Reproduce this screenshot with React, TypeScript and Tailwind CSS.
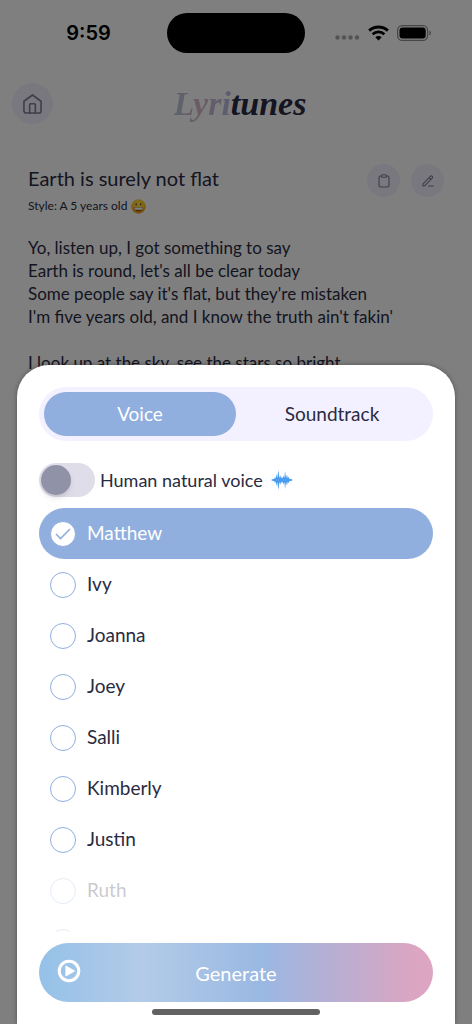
import React, { useState } from "react";

const voices = [
  "Matthew",
  "Ivy",
  "Joanna",
  "Joey",
  "Salli",
  "Kimberly",
  "Justin",
  "Ruth",
  "Kevin",
];

const stanzas = [
  [
    "Yo, listen up, I got something to say",
    "Earth is round, let's all be clear today",
    "Some people say it's flat, but they're mistaken",
    "I'm five years old, and I know the truth ain't fakin'",
  ],
  ["I look up at the sky, see the stars so bright"],
];

const StatusBar: React.FC = () => (
  <div className="flex items-center px-2.5 pt-[13px]">
    <div className="flex-1 text-center font-['Inter','Liberation_Sans',sans-serif] text-[20px] leading-6 font-semibold text-black">
      9:59
    </div>
    <div className="h-10 w-[138px] rounded-full bg-black" />
    <div className="flex flex-1 items-center justify-center gap-2">
      <svg width="25" height="18" viewBox="0 0 25 18" fill="#a8a8a8">
        <circle cx="2.5" cy="13.5" r="2.2" />
        <circle cx="9" cy="13.5" r="2.2" />
        <circle cx="15.5" cy="13.5" r="2.2" />
        <circle cx="22" cy="13.5" r="2.2" />
      </svg>
      <svg width="21" height="16" viewBox="0 0 22 16" fill="none" stroke="#000">
        <path d="M1.2 5.500C6.800 .4 15.200 .4 20.800 5.500" strokeWidth="3" />
        <path d="M4.800 9.200C8.400 6 13.600 6 17.200 9.200" strokeWidth="2.800" />
        <path d="M11 15.800L7.700 12.500C9.600 10.800 12.400 10.800 14.300 12.500Z" fill="#000" stroke="none" />
      </svg>
      <svg width="35" height="16" viewBox="0 0 35 16" fill="none">
        <rect x=".6" y=".6" width="30" height="14.800" rx="4.600" stroke="#8c8c8c" strokeWidth="1.200" />
        <rect x="2.500" y="2.500" width="26.200" height="11" rx="3" fill="#000" />
        <path d="M32.300 5.500C34.400 6.300 34.400 9.700 32.300 10.500Z" fill="#8c8c8c" />
      </svg>
    </div>
  </div>
);

const Grin: React.FC = () => (
  <svg width="15" height="15" viewBox="0 0 15 15" aria-label="grinning face" role="img">
    <defs>
      <radialGradient id="face" cx=".5" cy=".35" r=".65">
        <stop offset="0" stopColor="#ffe84a" />
        <stop offset=".6" stopColor="#ffc928" />
        <stop offset="1" stopColor="#e98a12" />
      </radialGradient>
    </defs>
    <circle cx="7.500" cy="7.500" r="7.200" fill="url(#face)" />
    <ellipse cx="5.200" cy="5.300" rx=".7" ry="1.100" fill="#5c3206" />
    <ellipse cx="9.800" cy="5.300" rx=".7" ry="1.100" fill="#5c3206" />
    <path d="M3 8.200H12C11.800 11.200 10 12.400 7.500 12.400S3.200 11.200 3 8.200Z" fill="#8a5412" />
    <path d="M3.400 8.500H11.600C11.500 9.700 11.200 10.500 10.900 10.700H4.100C3.700 10.300 3.500 9.500 3.400 8.500Z" fill="#fff" />
  </svg>
);

const SoundWave: React.FC = () => (
  <svg width="22" height="20" viewBox="0 0 22 20" fill="#4a9cf0" aria-hidden="true">
    <path d="M0 10L2 9L3.200 9L4 7L4.800 8.500L5.500 4L6.300 8L7.300 0L8.400 8L9.300 5L10 8.300L10.900 7L11.600 8.300L12.500 5.500L13.300 8L14.100 1L15 8L16 4.500L16.800 8.300L17.700 6.800L18.500 9L20 9L22 10L20 11L18.500 11L17.700 13.200L16.800 11.700L16 15.500L15 12L14.100 19L13.300 12L12.500 14.500L11.600 11.700L10.900 13L10 11.700L9.300 15L8.400 12L7.300 20L6.300 12L5.500 16L4.800 11.500L4 13L3.200 11L2 11Z" />
  </svg>
);

const App: React.FC = () => {
  const [voice, setVoice] = useState("Matthew");
  const [tab, setTab] = useState("Voice");
  const [natural, setNatural] = useState(false);

  return (
    <div className="relative min-h-screen overflow-hidden bg-white font-['Lato','Liberation_Sans',sans-serif] text-[#292b42]">
      <StatusBar />

      <header className="grid grid-cols-[1fr_auto_1fr] items-center px-3 pt-[30px]">
        <button aria-label="Home" className="flex size-[41px] items-center justify-center rounded-full bg-[#f3f0ff]">
          <svg width="19" height="20" viewBox="0 0 20 21" fill="none" stroke="#7d7e92" strokeWidth="1.700" strokeLinecap="round" strokeLinejoin="round">
            <path d="M1 7.600L10 1L19 7.600V17.800A2.200 2.200 0 0 1 16.800 20H3.200A2.200 2.200 0 0 1 1 17.800Z" />
            <path d="M7 20V11.300A1 1 0 0 1 8 10.300H12A1 1 0 0 1 13 11.300V20" />
          </svg>
        </button>
        <h1 className="pl-2 font-['Liberation_Serif',serif] text-[34px] leading-10 font-bold italic">
          <span className="bg-linear-to-r from-[#b4c8dc] via-[#d8b6c8] via-45% to-[#b4bce4] bg-clip-text text-transparent">Lyri</span>
          <span>tunes</span>
        </h1>
      </header>

      <main className="px-7 pt-10">
        <div className="flex items-start gap-[11px]">
          <h2 className="flex-1 text-[20px] leading-7">Earth is surely not flat</h2>
          <button aria-label="Copy lyrics" className="flex size-[33px] items-center justify-center rounded-full bg-[#f3f0ff]">
            <svg width="12" height="14" viewBox="0 0 12 14" fill="none" stroke="#7d7e92" strokeWidth="1.100" strokeLinejoin="round">
              <path d="M3.500 2H2.500A1.500 1.500 0 0 0 1 3.500V11.500A1.500 1.500 0 0 0 2.500 13H9.500A1.500 1.500 0 0 0 11 11.500V3.500A1.500 1.500 0 0 0 9.500 2H8.500" />
              <rect x="3.500" y=".8" width="5" height="2.400" rx="1" />
            </svg>
          </button>
          <button aria-label="Edit lyrics" className="flex size-[33px] items-center justify-center rounded-full bg-[#f3f0ff]">
            <svg width="12" height="12" viewBox="0 0 12 12" fill="none" stroke="#7d7e92" strokeWidth="1.100" strokeLinecap="round" strokeLinejoin="round">
              <path d="M1 8.800L8.300 1.300A1.200 1.200 0 0 1 10.200 3.200L2.800 10.600L.7 11ZM7 2.700L8.800 4.500" />
              <path d="M6.500 11H11.300" />
            </svg>
          </button>
        </div>
        <p className="flex items-center gap-1 text-[12px] leading-[18px]">
          Style: A 5 years old <Grin />
        </p>
        <div className="flex flex-col gap-[23px] pt-[21px] text-[17px] leading-[23px]">
          {stanzas.map((lines) => (
            <div key={lines[0]}>
              {lines.map((line) => (
                <p key={line}>{line}</p>
              ))}
            </div>
          ))}
        </div>
      </main>

      {/* Voice picker sheet */}
      <div className="absolute inset-0 flex flex-col justify-end bg-black/50 px-[17px]">
        <section className="rounded-t-[32px] bg-white px-[22px] pt-[22px] pb-[9px] shadow-[0_0_5px_rgba(0,0,0,0.35)]">
          <div role="tablist" className="flex rounded-full bg-[#f3f0ff] p-[5px]">
            {["Voice", "Soundtrack"].map((name) => (
              <button
                key={name}
                role="tab"
                aria-selected={tab === name}
                onClick={() => setTab(name)}
                className={`h-11 flex-1 rounded-full text-[19px] ${
                  tab === name ? "bg-[#90aede] text-white" : "text-[#292b42]"
                }`}
              >
                {name}
              </button>
            ))}
          </div>

          {/* Natural voice toggle */}
          <label className="flex items-center pt-[22px] text-[18px] leading-[34px]">
            <input
              type="checkbox"
              role="switch"
              checked={natural}
              onChange={(e) => setNatural(e.target.checked)}
              className="mr-[5px] h-[34px] w-14 appearance-none rounded-full bg-[#e0ddeb] p-0.5 before:block before:size-[30px] before:rounded-full before:bg-[#9093a7] before:shadow-md checked:before:ml-[22px]"
            />
            <span className="mr-2">Human natural voice</span>
            <SoundWave />
          </label>

          {/* Voice list */}
          <div className="relative mt-[11px]">
            <div className="h-[424px] overflow-y-auto [scrollbar-width:none]">
              {voices.map((name) => (
                <label
                  key={name}
                  className={`flex h-[51px] items-center gap-[11px] rounded-full px-[11px] text-[19px] ${
                    voice === name ? "bg-[#90aede] text-white" : ""
                  }`}
                >
                  <span className="grid size-[26px] place-items-center">
                    <input
                      type="radio"
                      name="voice"
                      checked={voice === name}
                      onChange={() => setVoice(name)}
                      className="col-start-1 row-start-1 size-[26px] appearance-none rounded-full border border-[#90aede] bg-white"
                    />
                    {voice === name && (
                      <svg width="16" height="12" viewBox="0 0 16 12" fill="none" stroke="#90aede" strokeWidth="1.600" className="pointer-events-none z-10 col-start-1 row-start-1">
                        <path d="M1 6L5.500 10.500L15 1" />
                      </svg>
                    )}
                  </span>
                  {name}
                </label>
              ))}
            </div>
            <div className="pointer-events-none absolute inset-x-0 bottom-0 h-[67px] bg-white/75" />
          </div>

          <button className="mt-[11px] grid h-[59px] w-full grid-cols-[24px_1fr_24px] items-center rounded-full bg-[linear-gradient(90deg,#95c1e8_0%,#b3cbe8_26%,#99b8e2_57%,#a3b5de_62%,#dca5c1_96%)] px-[18px] text-[20px] text-white">
            <svg width="24" height="24" viewBox="0 0 24 24" fill="none" className="mb-1">
              <circle cx="12" cy="12" r="9.800" stroke="#fff" strokeWidth="3" />
              <path d="M9 7.200L17.200 12L9 16.800Z" fill="#fff" stroke="#fff" strokeWidth="1.200" strokeLinejoin="round" />
            </svg>
            <span>Generate</span>
          </button>

          <div className="mx-auto mt-[7px] h-1.5 w-[168px] rounded-full bg-[#626262]" />
        </section>
      </div>
    </div>
  );
};

export default App;
